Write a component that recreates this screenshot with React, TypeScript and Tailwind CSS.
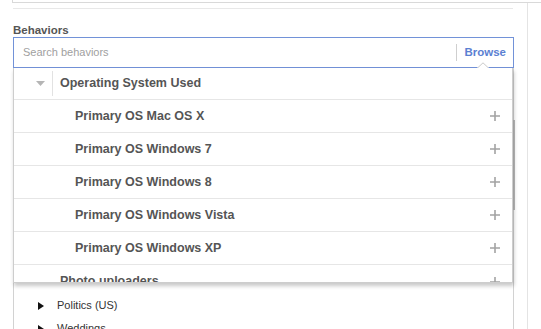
import { useState } from "react";

const children = [
  "Primary OS Mac OS X",
  "Primary OS Windows 7",
  "Primary OS Windows 8",
  "Primary OS Windows Vista",
  "Primary OS Windows XP",
];

const PlusIcon = () => (
  <svg width="10" height="10" viewBox="0 0 10 10" className="shrink-0">
    <path d="M5 0v10M0 5h10" stroke="#a3a3a3" strokeWidth="1.6" />
  </svg>
);

const App = () => {
  const [query, setQuery] = useState("");

  return (
    <div className="w-[541px] h-[329px] overflow-hidden bg-white font-['Liberation_Sans',Arial,sans-serif] text-[#555]">
      {/* outer panel edge */}
      <div className="h-[3px] ml-[12px] border-l border-b border-[#d9d9d9]"></div>

      <div className="w-[528px] h-[326px] border-r border-[#e4e4e4] pl-[13px] pt-[5px]">
        <div className="w-[500px] border-t border-[#e8e8e8]"></div>

        <div className="mt-[14px] leading-[14px] text-[11.5px] font-bold text-[#555]">
          Behaviors
        </div>

        <div className="relative w-[501px]">
          {/* search box */}
          <div className="h-[31px] border border-[#7292d8] flex items-center pl-[9px] pr-[7px] bg-white">
            <input
              value={query}
              onChange={(e) => setQuery(e.target.value)}
              placeholder="Search behaviors"
              className="flex-1 outline-none text-[11px] text-[#555] placeholder:text-[#a0a0a0] bg-transparent"
            />
            <div className="h-[17px] border-l border-[#cfcfcf] mr-[7px]"></div>
            <span className="text-[11.5px] font-bold text-[#5b7fd2]">Browse</span>
          </div>

          {/* tree behind the dropdown */}
          <div className="relative h-[270px] border-x border-[#d2d2d2] pt-[226px]">
            <div className="absolute right-[-2px] top-[52px] h-[90px] w-[2px] bg-[#b8b8b8]"></div>
            {["Politics (US)", "Weddings"].map((item) => (
              <div key={item} className="h-[23px] flex items-center pl-[24px] text-[11px] text-[#333]">
                <svg width="6" height="8" viewBox="0 0 6 8" className="shrink-0">
                  <path d="M0 0L6 4L0 8Z" fill="#111" />
                </svg>
                <span className="ml-[13px]">{item}</span>
              </div>
            ))}
          </div>

          {/* caret pointing at Browse */}
          <svg
            width="12"
            height="6"
            viewBox="0 0 12 6"
            className="absolute left-[464px] top-[25px] z-20"
          >
            <path d="M0 6L6 0.5L12 6Z" fill="#fff" />
            <path d="M0.5 6L6 0.8L11.5 6" fill="none" stroke="#c9c9c9" strokeWidth="1" />
          </svg>

          {/* dropdown */}
          <div className="absolute left-0 top-[31px] z-10 w-[500px] h-[215px] overflow-hidden bg-white border-x border-b border-[#cdcdcd] shadow-[1px_3px_4px_rgba(0,0,0,0.22)]">
            <div className="h-[32px] border-b border-[#e6e6e6] flex items-center pl-[22px]">
              <svg width="9" height="5" viewBox="0 0 9 5" className="shrink-0">
                <path d="M0 0H9L4.5 5Z" fill="#b5b5b5" />
              </svg>
              <div className="h-[25px] border-l border-[#e2e2e2] ml-[7px]"></div>
              <span className="ml-[7px] text-[12.5px] font-bold text-[#555]">
                Operating System Used
              </span>
            </div>

            {children.map((name) => (
              <div
                key={name}
                className="h-[33px] border-b border-[#e6e6e6] flex items-center justify-between pl-[61px] pr-[12px]"
              >
                <span className="text-[12.5px] font-bold text-[#555]">{name}</span>
                <PlusIcon />
              </div>
            ))}

            <div className="h-[33px] flex items-center justify-between pl-[46px] pr-[12px]">
              <span className="text-[12.5px] font-bold text-[#555]">Photo uploaders</span>
              <PlusIcon />
            </div>
          </div>
        </div>
      </div>
    </div>
  );
};

export default App;
